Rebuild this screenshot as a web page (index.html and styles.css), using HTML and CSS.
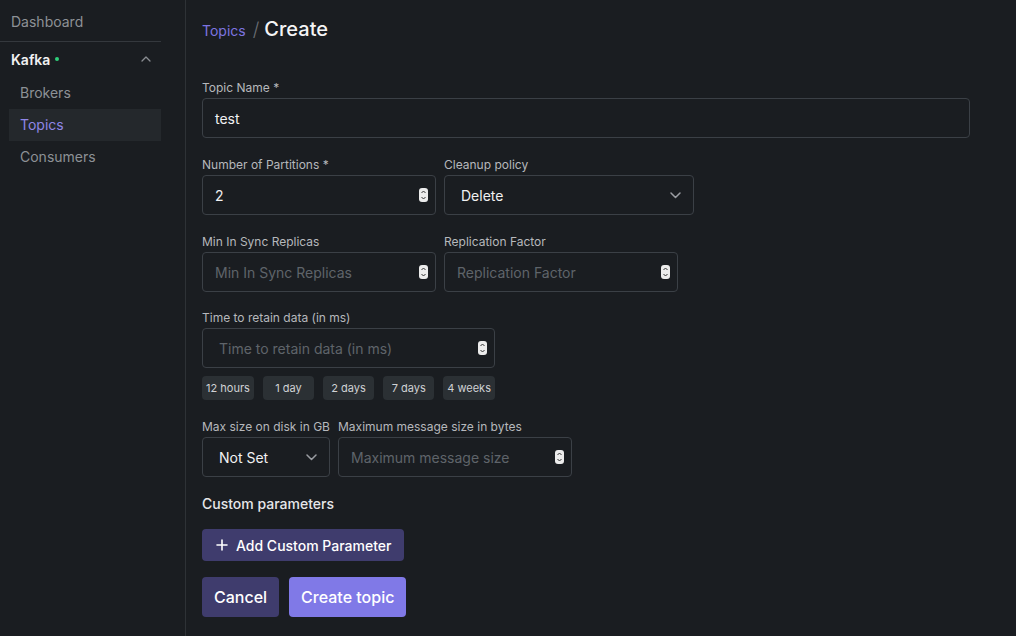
FILE: index.html
```html
<!DOCTYPE html>
<html>
<head>
<meta charset="utf-8">
<link rel="stylesheet" href="styles.css">
</head>
<body>
<div class="app">
  <aside class="sidebar">
    <div class="nav-top">Dashboard</div>
    <div class="divider"></div>
    <div class="group-head">
      <span class="group-title">Kafka <span class="dot"></span></span>
      <svg class="chev-up" width="10" height="6" viewBox="0 0 10 6"><path d="M1 5 L5 1 L9 5" fill="none" stroke="#8a8d92" stroke-width="1.3" stroke-linecap="round" stroke-linejoin="round"/></svg>
    </div>
    <div class="nav-item">Brokers</div>
    <div class="nav-item active">Topics</div>
    <div class="nav-item">Consumers</div>
  </aside>
  <main class="main">
    <div class="crumbs"><span class="crumb-link">Topics</span><span class="crumb-sep">/</span><span class="crumb-cur">Create</span></div>
    <div class="form">
      <div class="field">
        <div class="label">Topic Name *</div>
        <div class="input w-full"><span class="val">test</span></div>
      </div>
      <div class="row">
        <div class="field">
          <div class="label">Number of Partitions *</div>
          <div class="input w-233"><span class="val">2</span><svg class="spin" width="9" height="14" viewBox="0 0 9 14"><rect x="0" y="0" width="9" height="14" rx="3" fill="#ececec"/><path d="M2.5 5 L4.5 3 L6.5 5 M2.5 9 L4.5 11 L6.5 9" fill="none" stroke="#333" stroke-width="1"/></svg></div>
        </div>
        <div class="field">
          <div class="label">Cleanup policy</div>
          <div class="input select w-250"><span class="val sel">Delete</span><svg class="chev" width="11" height="7" viewBox="0 0 11 7"><path d="M1 1 L5.5 5.5 L10 1" fill="none" stroke="#9a9da2" stroke-width="1.5" stroke-linecap="round" stroke-linejoin="round"/></svg></div>
        </div>
      </div>
      <div class="row">
        <div class="field">
          <div class="label">Min In Sync Replicas</div>
          <div class="input w-233"><span class="ph">Min In Sync Replicas</span><svg class="spin" width="9" height="14" viewBox="0 0 9 14"><rect x="0" y="0" width="9" height="14" rx="3" fill="#ececec"/><path d="M2.5 5 L4.5 3 L6.5 5 M2.5 9 L4.5 11 L6.5 9" fill="none" stroke="#333" stroke-width="1"/></svg></div>
        </div>
        <div class="field">
          <div class="label">Replication Factor</div>
          <div class="input w-234"><span class="ph">Replication Factor</span><svg class="spin" width="9" height="14" viewBox="0 0 9 14"><rect x="0" y="0" width="9" height="14" rx="3" fill="#ececec"/><path d="M2.5 5 L4.5 3 L6.5 5 M2.5 9 L4.5 11 L6.5 9" fill="none" stroke="#333" stroke-width="1"/></svg></div>
        </div>
      </div>
      <div class="field retain">
        <div class="label">Time to retain data (in ms)</div>
        <div class="input w-292 pad-l"><span class="ph">Time to retain data (in ms)</span><svg class="spin" width="9" height="14" viewBox="0 0 9 14"><rect x="0" y="0" width="9" height="14" rx="3" fill="#ececec"/><path d="M2.5 5 L4.5 3 L6.5 5 M2.5 9 L4.5 11 L6.5 9" fill="none" stroke="#333" stroke-width="1"/></svg></div>
        <div class="chips">
          <span class="chip">12 hours</span>
          <span class="chip">1 day</span>
          <span class="chip">2 days</span>
          <span class="chip">7 days</span>
          <span class="chip">4 weeks</span>
        </div>
      </div>
      <div class="row">
        <div class="field">
          <div class="label">Max size on disk in GB</div>
          <div class="input select w-128"><span class="val sel">Not Set</span><svg class="chev" width="11" height="7" viewBox="0 0 11 7"><path d="M1 1 L5.5 5.5 L10 1" fill="none" stroke="#9a9da2" stroke-width="1.5" stroke-linecap="round" stroke-linejoin="round"/></svg></div>
        </div>
        <div class="field">
          <div class="label">Maximum message size in bytes</div>
          <div class="input w-233"><span class="ph">Maximum message size</span><svg class="spin" width="9" height="14" viewBox="0 0 9 14"><rect x="0" y="0" width="9" height="14" rx="3" fill="#ececec"/><path d="M2.5 5 L4.5 3 L6.5 5 M2.5 9 L4.5 11 L6.5 9" fill="none" stroke="#333" stroke-width="1"/></svg></div>
        </div>
      </div>
      <div class="section-title">Custom parameters</div>
      <div class="add-wrap">
        <button class="btn btn-add"><svg width="12" height="12" viewBox="0 0 12 12"><path d="M6 1 V11 M1 6 H11" stroke="#fff" stroke-width="1.6" stroke-linecap="round"/></svg>Add Custom Parameter</button>
      </div>
      <div class="actions">
        <button class="btn btn-cancel">Cancel</button>
        <button class="btn btn-create">Create topic</button>
      </div>
    </div>
  </main>
</div>
</body>
</html>
```
FILE: styles.css
```css
* { box-sizing: border-box; }
html, body { margin: 0; padding: 0; }
body {
  background: #1a1d21;
  font-family: Inter, "Noto Sans", sans-serif;
  color: #c1c2c5;
  width: 1016px;
  height: 636px;
  overflow: hidden;
}
.app { display: flex; height: 636px; }
.sidebar {
  width: 186px;
  flex: none;
  border-right: 1px solid #2e3236;
  padding-top: 12px;
}
.nav-top {
  font-size: 14px;
  line-height: 20px;
  color: #8d9196;
  padding-left: 11px;
}
.divider {
  width: 161px;
  height: 1px;
  background: #34383d;
  margin-top: 9px;
}
.group-head {
  display: flex;
  align-items: center;
  justify-content: space-between;
  width: 161px;
  padding: 0 10px 0 11px;
  height: 34px;
}
.group-title {
  font-size: 14px;
  font-weight: 600;
  color: #f1f1f2;
  display: flex;
  align-items: center;
  gap: 5px;
}
.dot {
  width: 4px; height: 4px; border-radius: 50%;
  background: #2fcf7a;
  display: inline-block;
}
.nav-item {
  margin-left: 9px;
  width: 152px;
  height: 32px;
  line-height: 32px;
  font-size: 14px;
  color: #8d9196;
  padding-left: 11px;
}
.nav-item.active {
  background: #24282c;
  color: #8f86e6;
}
.group-head + .nav-item { margin-top: 1px; }

.main {
  flex: 1;
  padding: 16px 0 0 16px;
}
.crumbs {
  display: flex;
  align-items: center;
  height: 26px;
}
.crumb-link { color: #7d74e0; font-size: 14px; margin-top: 2px; }
.crumb-sep { color: #6b6f75; font-size: 19px; margin: 0 5px 0 7px; font-weight: 300; }
.crumb-cur { color: #f4f4f5; font-size: 20px; font-weight: 500; }

.form {
  margin-top: 36px;
  display: flex;
  flex-direction: column;
  gap: 17px;
}
.row { display: flex; gap: 8px; }
.field { display: flex; flex-direction: column; }
.retain { margin-top: -1px; }
.label {
  font-size: 12px;
  line-height: 20px;
  color: #b6b8bc;
  font-weight: 400;
}
.input {
  height: 40px;
  border: 1px solid #3b4046;
  border-radius: 4px;
  display: flex;
  align-items: center;
  justify-content: space-between;
  padding: 0 7px 0 12px;
  font-size: 14px;
}
.input.select { padding: 0 12px 0 16px; }
.input.pad-l { padding-left: 16px; }
.w-full { width: 768px; }
.w-233 { width: 234px; }
.w-234 { width: 234px; }
.w-250 { width: 250px; }
.w-292 { width: 293px; }
.w-128 { width: 128px; }
.val { color: #f1f1f2; }
.ph { color: #5f646a; }
.spin { flex: none; }
.chev { flex: none; }
.chips {
  display: flex;
  justify-content: space-between;
  width: 293px;
  margin-top: 8px;
}
.chip {
  background: #2b3034;
  color: #d0d2d5;
  font-size: 11px;
  height: 24px;
  line-height: 24px;
  border-radius: 4px;
  padding: 0 4px;
  min-width: 51px;
  text-align: center;
}
.section-title {
  font-size: 14px;
  font-weight: 500;
  color: #e6e7e9;
  margin-top: 1px;
  line-height: 18px;
}
.add-wrap { margin-top: -1px; }
.btn {
  border: none;
  font-family: inherit;
  color: #fff;
  border-radius: 4px;
  display: inline-flex;
  align-items: center;
  cursor: pointer;
}
.btn-add {
  background: #3f3c6d;
  height: 32px;
  padding: 0 13px 0 14px;
  font-size: 14px;
  font-weight: 500;
  gap: 8px;
}
.actions { display: flex; gap: 10px; margin-top: -1px; }
.btn-cancel {
  background: #3f3c6d;
  height: 40px;
  padding: 0 12px;
  font-size: 16px;
  font-weight: 500;
}
.btn-create {
  background: #8079e7;
  height: 40px;
  padding: 0 12px;
  font-size: 16px;
  font-weight: 500;
}
```
